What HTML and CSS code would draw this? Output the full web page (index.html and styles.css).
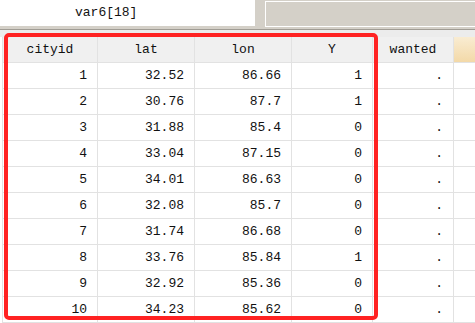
FILE: index.html
```html
<!DOCTYPE html>
<html>
<head>
<meta charset="utf-8">
<link rel="stylesheet" href="styles.css">
</head>
<body>
<div class="topbar">
  <div class="varbox">var6[18]</div>
  <div class="rightbox"></div>
</div>
<div class="sep"></div>
<div class="strip"></div>
<div class="grid">
  <div class="hd">cityid</div><div class="hd">lat</div><div class="hd">lon</div><div class="hd">Y</div><div class="hd">wanted</div><div class="hd sel"></div>
  <div class="c">1</div><div class="c">32.52</div><div class="c">86.66</div><div class="c">1</div><div class="c">.</div><div class="c e"></div>
  <div class="c">2</div><div class="c">30.76</div><div class="c">87.7</div><div class="c">1</div><div class="c">.</div><div class="c e"></div>
  <div class="c">3</div><div class="c">31.88</div><div class="c">85.4</div><div class="c">0</div><div class="c">.</div><div class="c e"></div>
  <div class="c">4</div><div class="c">33.04</div><div class="c">87.15</div><div class="c">0</div><div class="c">.</div><div class="c e"></div>
  <div class="c">5</div><div class="c">34.01</div><div class="c">86.63</div><div class="c">0</div><div class="c">.</div><div class="c e"></div>
  <div class="c">6</div><div class="c">32.08</div><div class="c">85.7</div><div class="c">0</div><div class="c">.</div><div class="c e"></div>
  <div class="c">7</div><div class="c">31.74</div><div class="c">86.68</div><div class="c">0</div><div class="c">.</div><div class="c e"></div>
  <div class="c">8</div><div class="c">33.76</div><div class="c">85.84</div><div class="c">1</div><div class="c">.</div><div class="c e"></div>
  <div class="c">9</div><div class="c">32.92</div><div class="c">85.36</div><div class="c">0</div><div class="c">.</div><div class="c e"></div>
  <div class="c">10</div><div class="c">34.23</div><div class="c">85.62</div><div class="c">0</div><div class="c">.</div><div class="c e"></div>
</div>
<div class="redbox"></div>
</body>
</html>
```

FILE: styles.css
```css
html, body {
  margin: 0;
  padding: 0;
  width: 475px;
  height: 323px;
  overflow: hidden;
  background: #ffffff;
  font-family: "Liberation Mono", "DejaVu Sans Mono", monospace;
  font-size: 13px;
  color: #111111;
}
.topbar {
  display: flex;
  gap: 10px;
  height: 29px;
  background: #d4d0c8;
}
.varbox {
  width: 180px;
  height: 26px;
  line-height: 26px;
  padding-left: 75px;
  background: #ffffff;
}
.rightbox {
  flex: 1;
  height: 24px;
  margin-top: 1px;
  border: 1px solid #ffffff;
  border-right: none;
  background: #d4d0c8;
}
.sep {
  height: 1px;
  background: #a09c94;
}
.strip {
  height: 7px;
  background: #ececec;
}
.grid {
  display: grid;
  grid-template-columns: 95px 97px 97px 81px 81px 1fr;
  margin-left: 2px;
  border-left: 1px solid #e2e2e2;
}
.hd {
  height: 25px;
  line-height: 25px;
  text-align: center;
  background: #f0f0f0;
  border-right: 1px solid #e2e2e2;
  border-bottom: 1px solid #e2e2e2;
}
.hd.sel {
  background: linear-gradient(#f9ecd2, #f3d9a8);
  border-right: none;
}
.c {
  height: 25px;
  line-height: 25px;
  text-align: right;
  padding-right: 10px;
  border-right: 1px solid #e2e2e2;
  border-bottom: 1px solid #e2e2e2;
}
.c.e {
  border-right: none;
  padding-right: 0;
}
.redbox {
  position: absolute;
  left: 4px;
  top: 33px;
  width: 366px;
  height: 279px;
  border: 4px solid #ff2222;
  border-radius: 5px;
}
```
